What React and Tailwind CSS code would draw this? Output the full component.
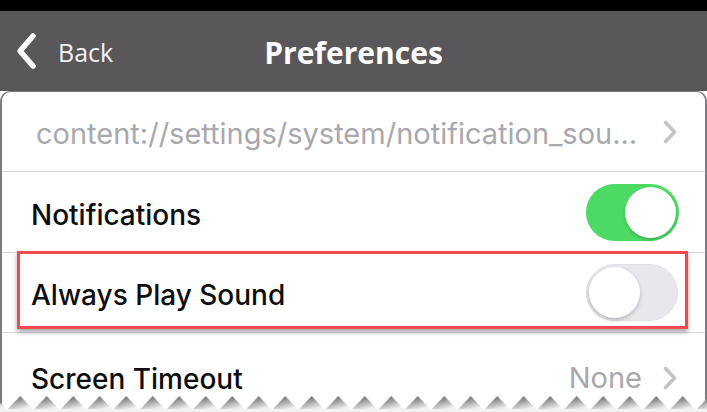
function Chevron() {
  return (
    <svg width="16" height="26" viewBox="0 0 16 26" className="shrink-0">
      <path d="M3.5 3.5 L12.5 13 L3.5 22.5" fill="none" stroke="#c4c3c8" strokeWidth="3.6" strokeLinecap="round" strokeLinejoin="round" />
    </svg>
  )
}

function Toggle({ on }) {
  return on ? (
    <div className="w-[93px] h-[57px] rounded-full bg-[#4cd964] flex items-center justify-end pr-[3px]">
      <div className="w-[51px] h-[51px] rounded-full bg-white shadow-[0_2px_3px_rgba(0,0,0,0.18)]" />
    </div>
  ) : (
    <div className="w-[92px] h-[57px] rounded-full bg-[#e9e7eb] border border-[#e2e0e4] flex items-center pl-[2px]">
      <div className="w-[51px] h-[51px] rounded-full bg-white shadow-[0_2px_4px_rgba(0,0,0,0.22)]" />
    </div>
  )
}

export default function App() {
  const rowText = 'text-[28px] font-medium text-[#0d0d0d] pt-[5px]'
  return (
    <div className="w-[707px] h-[412px] overflow-hidden relative bg-white" style={{ fontFamily: 'Inter, "Liberation Sans", sans-serif' }}>
      <div className="h-[11px] bg-black" />

      {/* header */}
      <div className="h-[80px] bg-[#5a575b] grid grid-cols-[1fr_auto_1fr] items-center">
        <div className="flex items-center pl-[14px] gap-[18px] text-white">
          <svg width="26" height="38" viewBox="0 0 26 38">
            <path d="M19 4 L6 19 L19 34" fill="none" stroke="white" strokeWidth="5.5" strokeLinecap="round" strokeLinejoin="round" />
          </svg>
          <span className="text-[25px] text-[#f2f2f2] pt-[4px]" style={{ fontFamily: '"Open Sans", sans-serif' }}>Back</span>
        </div>
        <span className="text-[30px] font-bold text-white pt-[2px]" style={{ fontFamily: '"Open Sans", sans-serif' }}>Preferences</span>
        <div />
      </div>

      {/* card */}
      <div className="bg-white rounded-t-[10px] border-t border-l-2 border-r-2 border-[#7d7b80]">
        <div className="h-[80px] flex items-center justify-between pl-[34px] pr-[27px] border-b border-[#d9d8dc]">
          <span className="text-[29px] text-[#a9a8ad] pt-[5px]">content://settings/system/notification_sou...</span>
          <Chevron />
        </div>
        <div className="h-[81px] flex items-center justify-between pl-[29px] pr-[26px] border-b border-[#d9d8dc]">
          <span className={rowText}>Notifications</span>
          <Toggle on />
        </div>
        <div className="h-[80px] flex items-center justify-between pl-[29px] pr-[27px] border-b border-[#d9d8dc] relative">
          <span className={rowText}>Always Play Sound</span>
          <Toggle on={false} />
          <div className="absolute left-[15px] right-[17px] top-[-2px] bottom-[3px] border-[3px] border-[#ef4a50] shadow-[0_3px_5px_rgba(0,0,0,0.35)]" />
        </div>
        <div className="h-[80px] flex items-center justify-between pl-[29px] pr-[27px] pt-[6px]">
          <span className={rowText}>Screen Timeout</span>
          <div className="flex items-center gap-[20px] pt-[4px]">
            <span className="text-[29px] text-[#a9a8ad]">None</span>
            <Chevron />
          </div>
        </div>
      </div>

      {/* torn edge */}
      <svg className="absolute left-0 bottom-0" width="707" height="18" viewBox="0 0 707 18">
        <defs>
          <linearGradient id="tear" x1="0" y1="0" x2="0.5" y2="1">
            <stop offset="0" stopColor="#4a4a4a" />
            <stop offset="0.55" stopColor="#a8a8a8" />
            <stop offset="1" stopColor="#f2f2f2" />
          </linearGradient>
          <pattern id="zig" x="7" y="0" width="26.5" height="18" patternUnits="userSpaceOnUse">
            <path d="M0 16 L13.25 2 L26.5 16 Z" fill="url(#tear)" />
          </pattern>
        </defs>
        <rect x="0" y="0" width="707" height="18" fill="url(#zig)" />
        <rect x="0" y="15" width="707" height="3" fill="#f2f2f2" />
      </svg>
    </div>
  )
}
